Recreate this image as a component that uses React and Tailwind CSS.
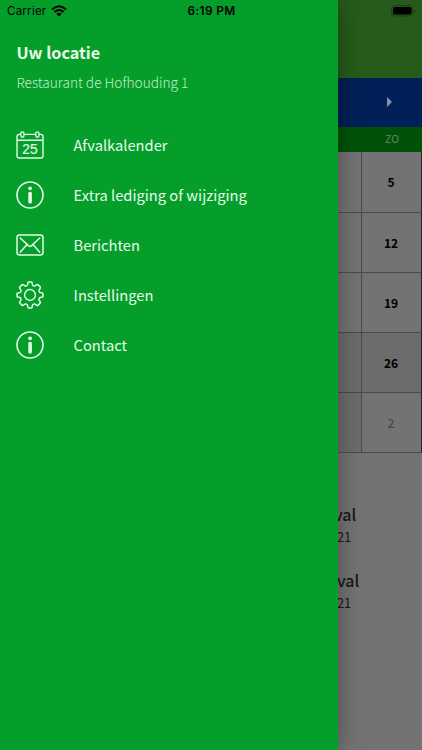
import React from "react";

function InfoIcon() {
  return (
    <svg width="28" height="28" viewBox="0 0 28 28" fill="none" stroke="#e2fae6" strokeWidth="1.6">
      <circle cx="14" cy="14" r="13" />
      <circle cx="14.1" cy="7.3" r="1.9" fill="#e2fae6" stroke="none" />
      <rect x="12.3" y="10.7" width="3.6" height="11.8" rx="1.6" fill="#e2fae6" stroke="none" />
    </svg>
  );
}

function CalendarIcon() {
  return (
    <svg width="28" height="28" viewBox="0 0 28 28" fill="none" stroke="#e2fae6" strokeWidth="1.4">
      <path d="M4.5 3.4H3.2Q1 3.4 1 5.6V24.8Q1 27 3.2 27H24.8Q27 27 27 24.8V5.6Q27 3.4 24.8 3.4H23.2M8.2 3.4H19.6M1 9.3H27" />
      <rect x="4.8" y="0.9" width="3.2" height="5.3" rx="1.6" />
      <rect x="19.8" y="0.9" width="3.2" height="5.3" rx="1.6" />
      <text x="14" y="23" textAnchor="middle" fill="#e2fae6" stroke="#e2fae6" strokeWidth="0.15" fontSize="13.8" fontFamily="'Liberation Sans', sans-serif">25</text>
    </svg>
  );
}

function MailIcon() {
  return (
    <svg width="28" height="28" viewBox="0 0 28 28" fill="none" stroke="#e2fae6" strokeWidth="1.5" strokeLinecap="round" strokeLinejoin="round">
      <rect x="1" y="4" width="26" height="20" rx="2.4" />
      <path d="M4.2 7L12.7 14.9Q14 16 15.3 14.9L23.8 7M4.2 21.2L10.6 14M23.8 21.2L17.4 14" />
    </svg>
  );
}

function GearIcon() {
  return (
    <svg width="28" height="28" viewBox="0 0 28 28" fill="none" stroke="#e2fae6" strokeWidth="1.5" strokeLinejoin="round">
      <circle cx="14" cy="14" r="5.4" />
      <path d="M11.9 1.8Q12 1 12.8 1H15.2Q16 1 16.1 1.8L16.4 3.7Q16.6 4.6 17.5 4.9Q18.3 5.3 19.1 4.8L20.8 3.7Q21.5 3.3 22.1 3.9L24.1 5.9Q24.7 6.5 24.3 7.2L23.2 8.9Q22.7 9.7 23.1 10.5Q23.4 11.4 24.3 11.6L26.2 11.9Q27 12 27 12.8V15.2Q27 16 26.2 16.1L24.3 16.4Q23.4 16.6 23.1 17.5Q22.7 18.3 23.2 19.1L24.3 20.8Q24.7 21.5 24.1 22.1L22.1 24.1Q21.5 24.7 20.8 24.3L19.1 23.2Q18.3 22.7 17.5 23.1Q16.6 23.4 16.4 24.3L16.1 26.2Q16 27 15.2 27H12.8Q12 27 11.9 26.2L11.6 24.3Q11.4 23.4 10.5 23.1Q9.7 22.7 8.9 23.2L7.2 24.3Q6.5 24.7 5.9 24.1L3.9 22.1Q3.3 21.5 3.7 20.8L4.8 19.1Q5.3 18.3 4.9 17.5Q4.6 16.6 3.7 16.4L1.8 16.1Q1 16 1 15.2V12.8Q1 12 1.8 11.9L3.7 11.6Q4.6 11.4 4.9 10.5Q5.3 9.7 4.8 8.9L3.7 7.2Q3.3 6.5 3.9 5.9L5.9 3.9Q6.5 3.3 7.2 3.7L8.9 4.8Q9.7 5.3 10.5 4.9Q11.4 4.6 11.6 3.7Z" />
    </svg>
  );
}

const menu = [
  { label: "Afvalkalender", Icon: CalendarIcon },
  { label: "Extra lediging of wijziging", Icon: InfoIcon },
  { label: "Berichten", Icon: MailIcon },
  { label: "Instellingen", Icon: GearIcon },
  { label: "Contact", Icon: InfoIcon },
];

const weeks = [
  { day: "5", row: "bg-[#737373]", text: "text-black font-bold" },
  { day: "12", row: "bg-[#737373]", text: "text-black font-bold" },
  { day: "19", row: "bg-[#737373]", text: "text-black font-bold" },
  { day: "26", row: "bg-[#6c6c6c]", text: "text-black font-bold" },
  { day: "2", row: "bg-[#737373]", left: "bg-[#6c6c6c]", text: "text-[#484848] font-medium" },
];

function StatusBar() {
  return (
    <div className="absolute inset-x-0 top-0 z-20 flex h-[22px] items-center font-['Inter','Liberation_Sans',sans-serif] text-black">
      <div className="flex flex-1 items-center gap-[5px] pl-[7px]">
        <span className="text-[11.5px] leading-[22px] tracking-[0.25px]">Carrier</span>
        <svg width="16" height="12" viewBox="0 0 16 12" fill="none" stroke="#000" strokeWidth="2.1">
          <path d="M1 4.5Q8-2 15 4.5M3.5 7Q8 3 12.5 7" />
          <path d="M5.3 8.8Q8 6.8 10.7 8.8L8 11.5Z" fill="#000" stroke="none" />
        </svg>
      </div>
      <span className="text-[11.8px] font-semibold leading-[22px] tracking-[0.4px]">6:19 PM</span>
      <div className="flex flex-1 justify-end pr-[6px]">
        <svg width="25" height="12" viewBox="0 0 25 12">
          <rect x="0.7" y="0.7" width="21.2" height="10.2" rx="3" fill="none" stroke="#1a3d13" strokeWidth="1" />
          <rect x="2" y="2" width="18.6" height="7.6" rx="1.8" fill="#000" />
          <path d="M23.2 4V7.7Q24.5 7.2 24.5 5.85Q24.5 4.5 23.2 4Z" fill="#1a3d13" />
        </svg>
      </div>
    </div>
  );
}

export default function App() {
  return (
    <div className="relative h-[750px] w-[422px] overflow-hidden bg-[#737373] font-['Noto_Sans_CJK_JP','Noto_Sans_CJK_SC',sans-serif]">
      <main className="flex h-full flex-col">
        <div className="h-[78px] bg-[#265c1b]" />
        <div className="flex h-[48.5px] items-center justify-end bg-[#002057] pr-[30px]">
          <svg width="5" height="10" viewBox="0 0 5 10"><path d="M0 0L5 5L0 10Z" fill="#8790a2" /></svg>
        </div>
        <div className="flex h-[25.9px] justify-end bg-[#005208]">
          <div className="flex w-[61px] items-center justify-center border-l border-[#0c480f] text-[10.5px] leading-none text-[#5f8c60]">ZO</div>
        </div>
        <div className="flex flex-col">
          {weeks.map((w) => (
            <div key={w.day} className={`flex h-[60.2px] border-b border-r border-b-[#4b4b4b] border-r-[#222222] ${w.row}`}>
              <div className={`flex-1 ${w.left || ""}`} />
              <div className={`flex w-[60px] items-center justify-center border-l border-[#4b4b4b] pt-px pr-px text-[12px] leading-none ${w.text}`}>{w.day}</div>
            </div>
          ))}
        </div>
        <div className="mt-[48.6px] flex flex-col gap-[20px] pl-[334px] text-[#171717]">
          <div>
            <div className="text-[16px] font-medium leading-[24px]">val</div>
            <div className="pl-[3px] text-[12.8px] leading-[22px]">21</div>
          </div>
          <div>
            <div className="pl-[3px] text-[16px] font-medium leading-[24px]">val</div>
            <div className="pl-[3px] text-[12.8px] leading-[22px]">21</div>
          </div>
        </div>
      </main>
      <aside className="absolute inset-y-0 left-0 z-10 flex w-[337.5px] flex-col bg-[#059e2a] pl-[16.4px] text-[#e6fbe9] shadow-[2px_0_22px_rgba(0,0,0,0.3)]">
        <h1 className="mt-[40px] text-[16.2px] font-bold leading-[24px]">Uw locatie</h1>
        <p className="mt-[6px] text-[13.7px] font-light leading-[24px] text-[#c0efc8]">Restaurant de Hofhouding 1</p>
        <nav className="mt-[26px] flex flex-col">
          {menu.map(({ label, Icon }) => (
            <div key={label} className="flex h-[49.9px] items-center gap-[29.2px]">
              <Icon />
              <span className="text-[14.7px] leading-[24px]">{label}</span>
            </div>
          ))}
        </nav>
      </aside>
      <StatusBar />
    </div>
  );
}
